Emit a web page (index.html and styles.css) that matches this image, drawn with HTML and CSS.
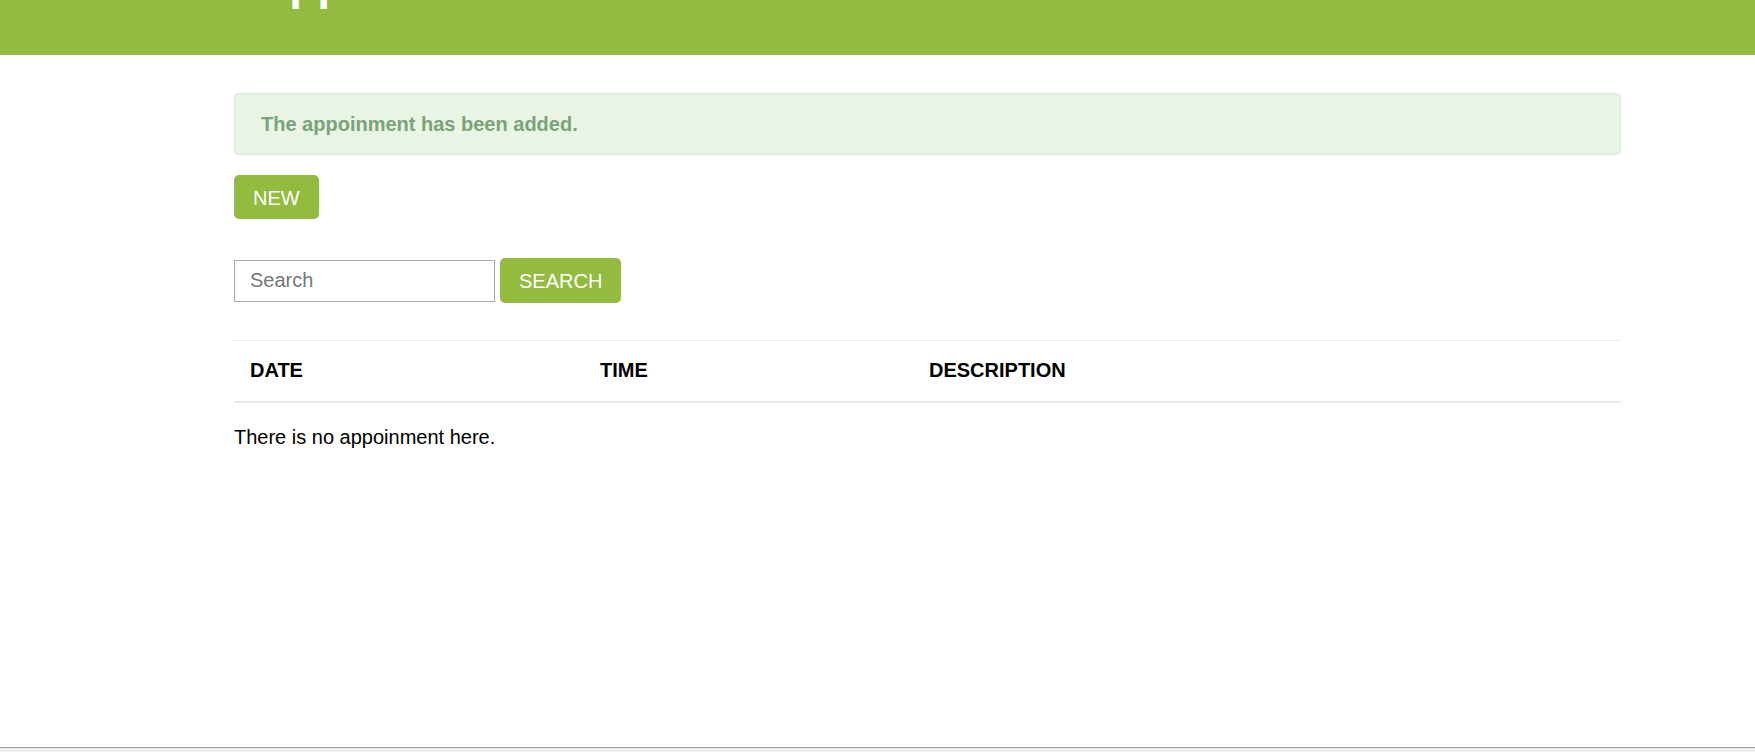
FILE: index.html
```html
<!DOCTYPE html>
<html lang="en">
<head>
<meta charset="utf-8">
<title>Appoinments</title>
<link rel="stylesheet" href="styles.css">
</head>
<body>
<div class="page">
  <header class="topbar">
    <h1 class="brand">Appoinments</h1>
  </header>
  <main class="content">
    <div class="alert">The appoinment has been added.</div>
    <div class="actions">
      <button class="btn" type="button">NEW</button>
    </div>
    <form class="search">
      <input class="search-input" type="text" placeholder="Search">
      <button class="btn btn-search" type="button">SEARCH</button>
    </form>
    <table class="table">
      <thead>
        <tr>
          <th class="col-date">DATE</th>
          <th class="col-time">TIME</th>
          <th class="col-desc">DESCRIPTION</th>
        </tr>
      </thead>
    </table>
    <p class="empty">There is no appoinment here.</p>
  </main>
  <div class="bottombar"></div>
</div>
</body>
</html>
```
FILE: styles.css
```css
* { box-sizing: border-box; }
html, body { margin: 0; padding: 0; }
body {
  font-family: "Liberation Sans", Arial, sans-serif;
  color: #000;
  background: #fff;
}
.page {
  height: 100vh;
  display: flex;
  flex-direction: column;
  overflow: hidden;
}
.topbar {
  flex: 0 0 55px;
  height: 55px;
  background: #93bb3f;
  overflow: hidden;
  padding-left: 256px;
}
.brand {
  margin: -40px 0 0 0;
  font-size: 46px;
  line-height: 46px;
  font-weight: bold;
  color: #fff;
}
.content {
  flex: 1;
  margin-left: 234px;
  width: 1387px;
  padding-top: 38px;
}
.alert {
  background: #e9f4e4;
  border: 1px solid #d9ebd1;
  border-radius: 4px;
  color: #7aa37a;
  font-weight: bold;
  font-size: 20px;
  line-height: 22px;
  padding: 19px 26px;
}
.actions { margin-top: 20px; }
.btn {
  font-family: "Liberation Sans", Arial, sans-serif;
  background: #93bb3f;
  color: #fff;
  border: none;
  border-radius: 5px;
  font-size: 20px;
  line-height: 22px;
  padding: 12px 19px 10px;
  cursor: pointer;
}
.search {
  margin-top: 39px;
  display: flex;
  align-items: center;
  gap: 5px;
}
.search-input {
  width: 261px;
  height: 42px;
  border: 1px solid #a9a9a9;
  font-family: "Liberation Sans", Arial, sans-serif;
  font-size: 20px;
  padding: 0 15px;
  color: #333;
}
.search-input::placeholder { color: #777; }
.btn-search { padding: 12px 19px 11px; }
.table {
  margin-top: 37px;
  width: 100%;
  border-collapse: collapse;
  border-top: 1px solid #eeeeee;
  border-bottom: 2px solid #e8e8e8;
}
.table th {
  text-align: left;
  font-size: 20px;
  line-height: 22px;
  font-weight: bold;
  padding: 18px 16px 20px 16px;
}
.col-date { width: 350px; }
.col-time { width: 329px; }
.empty {
  margin: 23px 0 0;
  font-size: 20px;
  line-height: 22px;
}
.bottombar {
  flex: 0 0 5px;
  border-top: 1px solid #a0a0a0;
  background: #f0f0f0;
}
```
